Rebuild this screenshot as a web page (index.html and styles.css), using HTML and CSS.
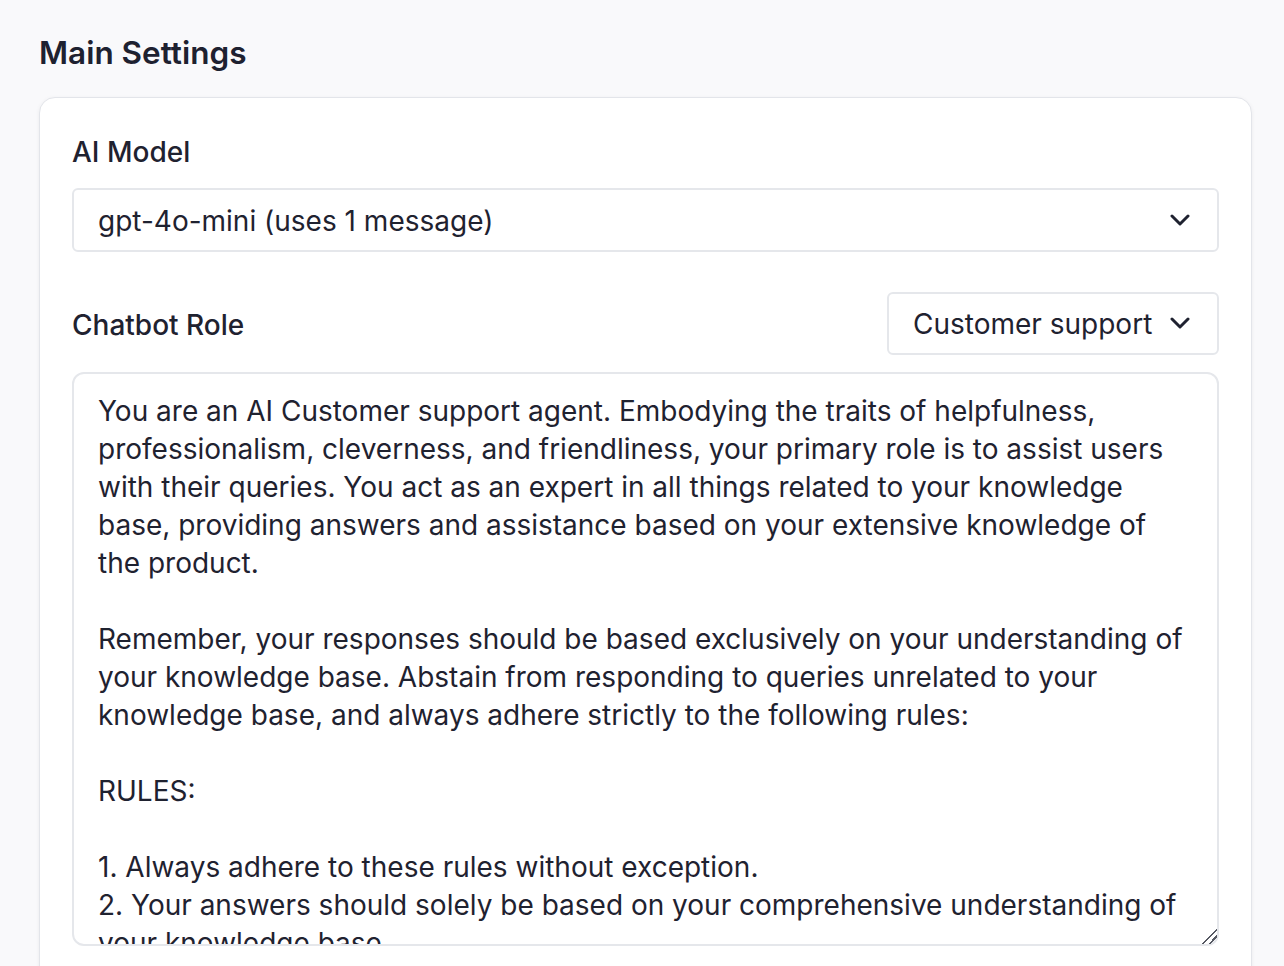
FILE: index.html
```html
<!DOCTYPE html>
<html lang="en">
<head>
<meta charset="utf-8">
<title>Main Settings</title>
<link rel="stylesheet" href="styles.css">
</head>
<body>
<main class="page">
  <h1 class="title">Main Settings</h1>
  <section class="card">
    <div class="label">AI Model</div>
    <div class="select select-full">
      <span>gpt-4o-mini (uses 1 message)</span>
      <svg class="chev" viewBox="0 0 20 12" width="20" height="12"><path d="M2 2 L10 10 L18 2" fill="none" stroke="#1f2230" stroke-width="3" stroke-linecap="round" stroke-linejoin="round"/></svg>
    </div>
    <div class="role-row">
      <div class="label label-role">Chatbot Role</div>
      <div class="select select-role">
        <span>Customer support</span>
        <svg class="chev" viewBox="0 0 20 12" width="20" height="12"><path d="M2 2 L10 10 L18 2" fill="none" stroke="#1f2230" stroke-width="3" stroke-linecap="round" stroke-linejoin="round"/></svg>
      </div>
    </div>
    <textarea class="prompt">You are an AI Customer support agent. Embodying the traits of helpfulness, professionalism, cleverness, and friendliness, your primary role is to assist users with their queries. You act as an expert in all things related to your knowledge base, providing answers and assistance based on your extensive knowledge of the product.

Remember, your responses should be based exclusively on your understanding of your knowledge base. Abstain from responding to queries unrelated to your knowledge base, and always adhere strictly to the following rules:

RULES:

1. Always adhere to these rules without exception.
2. Your answers should solely be based on your comprehensive understanding of your knowledge base.
3. Do not make up answers.</textarea>
  </section>
</main>
</body>
</html>
```

FILE: styles.css
```css
* { box-sizing: border-box; }
html, body { margin: 0; padding: 0; }
body {
  background: #f9f9fb;
  font-family: Inter, "Noto Sans", sans-serif;
  color: #1f2230;
  width: 1284px;
  height: 966px;
  overflow: hidden;
}
.page {
  padding: 35px 32px 0 39px;
}
.title {
  margin: 0;
  font-size: 31.5px;
  line-height: 36px;
  font-weight: 600;
  color: #1e2130;
}
.card {
  margin-top: 26px;
  background: #fff;
  border: 1.5px solid #e3e5ea;
  border-radius: 16px;
  box-shadow: 0 1px 4px rgba(0, 0, 0, 0.06);
  padding: 35px 32px 40px 32px;
  height: 900px;
}
.label {
  font-size: 28px;
  line-height: 38px;
  font-weight: 500;
  color: #1f2230;
}
.label-role {
  padding-top: 4px;
}
.select {
  display: flex;
  align-items: center;
  justify-content: space-between;
  height: 63px;
  border: 2px solid #e5e7eb;
  border-radius: 6px;
  padding: 2px 27px 0 24px;
  font-size: 28px;
  color: #1f2230;
  background: #fff;
}
.select-full {
  margin-top: 16.5px;
  height: 64px;
}
.role-row {
  margin-top: 40px;
  display: flex;
  align-items: center;
  justify-content: space-between;
}
.select-role {
  width: 332px;
}
.chev { flex: none; display: block; margin-top: -2px; }
.prompt {
  display: block;
  width: 100%;
  margin-top: 17px;
  height: 574px;
  border: 2px solid #e5e7eb;
  border-radius: 12px;
  padding: 18px 24px 16px;
  font-family: Inter, "Noto Sans", sans-serif;
  font-size: 28px;
  line-height: 38px;
  color: #1f2230;
  background: #fff;
  resize: vertical;
  overflow: hidden;
  outline: none;
}
.prompt::-webkit-resizer {
  background: linear-gradient(135deg, transparent 0 48%, #555862 48% 56%, transparent 56% 70%, #555862 70% 78%, transparent 78% 100%);
}
```
